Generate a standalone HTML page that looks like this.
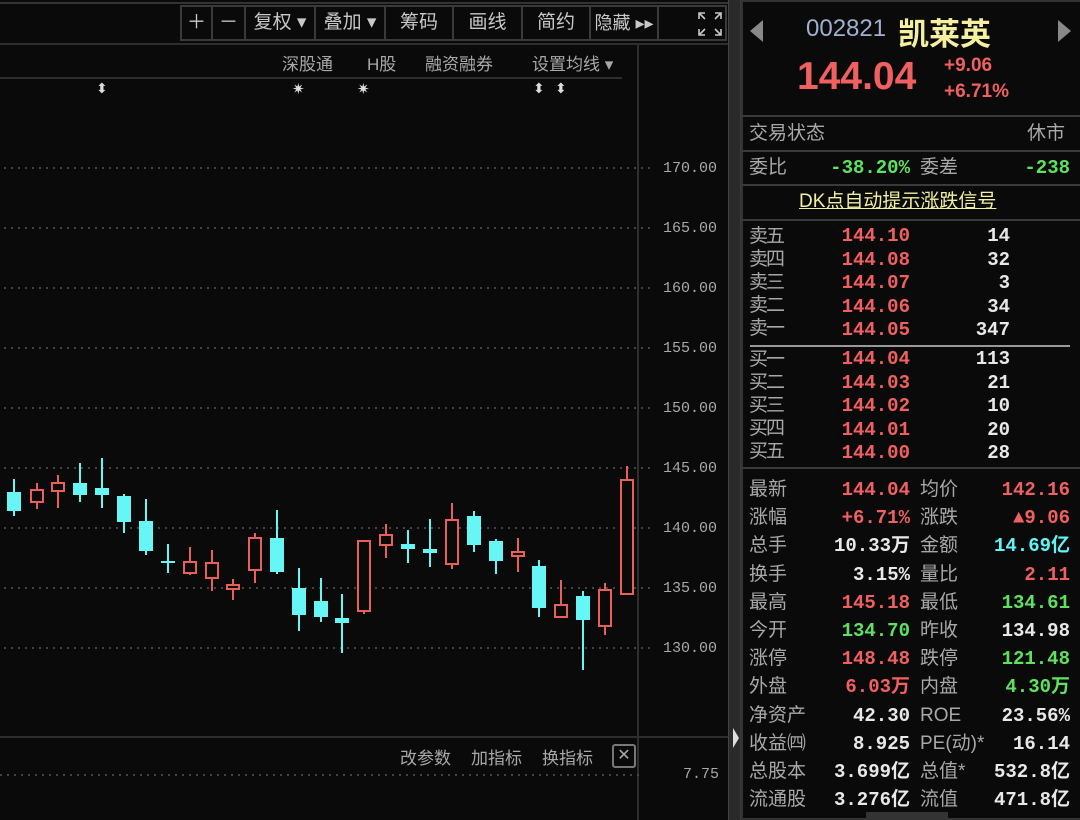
<!DOCTYPE html>
<html><head><meta charset="utf-8"><style>
*{margin:0;padding:0;box-sizing:border-box}
body{width:1080px;height:820px;background:#0a0a0a;position:relative;overflow:hidden;font-family:"Liberation Sans","Noto Sans CJK SC",sans-serif;color:#c8c8c8}
.a{position:absolute;white-space:nowrap}
.hl{position:absolute;height:2px;background:#2e2e2e}
.vl{position:absolute;width:2px;background:#2e2e2e}
.btn{position:absolute;top:5px;height:36px;border:2px solid #3a3a3a;color:#c8c8c8;font-size:19px;line-height:32px;text-align:center}
.tb{font-size:17px;color:#a8a8a8}
.ax{font-family:"Liberation Mono",monospace;font-size:15px;color:#a8a8a8}
.lb{font-size:19px;color:#a8a8a8;line-height:22px}
.v{font-size:19px;font-family:"Liberation Mono","Noto Sans CJK SC",monospace;font-weight:bold;line-height:22px;text-align:right}
.r{color:#f06060}.g{color:#60e060}.w{color:#e8e8e8}.c{color:#60f4f4}
.ob{font-size:19px;color:#a8a8a8;line-height:23px;letter-spacing:-2px}
</style></head><body>
<div class="hl" style="left:0;top:2px;width:728px;background:#333"></div>
<div class="btn" style="left:180px;width:33px">＋</div>
<div class="btn" style="left:211px;width:35px">－</div>
<div class="btn" style="left:244px;width:72px">复权 ▾</div>
<div class="btn" style="left:314px;width:72px">叠加 ▾</div>
<div class="btn" style="left:384px;width:70px">筹码</div>
<div class="btn" style="left:452px;width:71px">画线</div>
<div class="btn" style="left:521px;width:70px">简约</div>
<div class="btn" style="left:589px;width:70px;font-size:18px">隐藏 ▸▸</div>
<div class="btn" style="left:657px;width:70px;font-size:16px"></div>
<svg class="a" style="left:697px;top:11px" width="26" height="26" viewBox="0 0 26 26" fill="none" stroke="#c8c8c8" stroke-width="1.6"><path d="M2 8V2h6M2 2l6 6M24 8V2h-6M24 2l-6 6M2 18v6h6M2 24l6-6M24 18v6h-6M24 24l-6-6"/></svg>
<div class="hl" style="left:0;top:43px;width:728px"></div>
<div class="hl" style="left:0;top:77px;width:622px"></div>
<div class="a tb" style="left:282px;top:50px">深股通</div>
<div class="a tb" style="left:367px;top:50px">H股</div>
<div class="a tb" style="left:425px;top:50px">融资融券</div>
<div class="a tb" style="left:532px;top:50px">设置均线 ▾</div>
<div class="a" style="left:96px;top:80px;color:#ddd;font-size:14px">⬍</div>
<div class="a" style="left:292px;top:80px;color:#ddd;font-size:15px">✷</div>
<div class="a" style="left:357px;top:80px;color:#ddd;font-size:15px">✷</div>
<div class="a" style="left:533px;top:80px;color:#ddd;font-size:14px">⬍</div>
<div class="a" style="left:555px;top:80px;color:#ddd;font-size:14px">⬍</div>
<div class="vl" style="left:637px;top:44px;height:776px"></div>
<div class="hl" style="left:0;top:736px;width:728px"></div>
<svg class="a" style="left:0;top:0" width="728" height="820">
<g stroke="#444" stroke-width="2" stroke-dasharray="2 5">
<line x1="4" y1="168" x2="652" y2="168"/><line x1="4" y1="228" x2="652" y2="228"/><line x1="4" y1="288" x2="652" y2="288"/><line x1="4" y1="348" x2="652" y2="348"/><line x1="4" y1="408" x2="652" y2="408"/><line x1="4" y1="468" x2="652" y2="468"/><line x1="4" y1="528" x2="652" y2="528"/><line x1="4" y1="588" x2="652" y2="588"/><line x1="4" y1="648" x2="652" y2="648"/><line x1="0" y1="775" x2="640" y2="775"/>
</g>
<g id="k"></g>
</svg>
<div class="a ax" style="left:663px;top:160px">170.00</div>
<div class="a ax" style="left:663px;top:220px">165.00</div>
<div class="a ax" style="left:663px;top:280px">160.00</div>
<div class="a ax" style="left:663px;top:340px">155.00</div>
<div class="a ax" style="left:663px;top:400px">150.00</div>
<div class="a ax" style="left:663px;top:460px">145.00</div>
<div class="a ax" style="left:663px;top:520px">140.00</div>
<div class="a ax" style="left:663px;top:580px">135.00</div>
<div class="a ax" style="left:663px;top:640px">130.00</div>
<div class="a ax" style="left:683px;top:766px">7.75</div>
<div class="a tb" style="left:400px;top:744px">改参数</div>
<div class="a tb" style="left:471px;top:744px">加指标</div>
<div class="a tb" style="left:542px;top:744px">换指标</div>
<div class="a" style="left:612px;top:744px;width:24px;height:24px;border:2px solid #777;border-radius:3px;color:#aaa;font-size:16px;line-height:20px;text-align:center">✕</div>
<div class="a" style="left:728px;top:0;width:13px;height:820px;background:#2a2a2a;border-left:1px solid #444;border-right:1px solid #3a3a3a"></div>
<div class="a" style="left:733px;top:728px;width:0;height:0;border-top:10px solid transparent;border-bottom:10px solid transparent;border-left:6px solid #ddd"></div>
<div class="a" style="left:741px;top:0;width:339px;height:820px;border:2px solid #333;border-right:none"></div>
<div class="a" style="left:750px;top:20px;width:0;height:0;border-top:11px solid transparent;border-bottom:11px solid transparent;border-right:13px solid #888"></div>
<div class="a" style="left:1058px;top:20px;width:0;height:0;border-top:11px solid transparent;border-bottom:11px solid transparent;border-left:13px solid #888"></div>
<div class="a" style="left:806px;top:15px;font-size:24px;color:#9fb0d0">002821</div>
<div class="a" style="left:898px;top:9px;font-size:31px;color:#f4f0a0;font-weight:bold">凯莱英</div>
<div class="a r" style="left:797px;top:55px;font-size:39px;font-weight:bold">144.04</div>
<div class="a r" style="left:944px;top:55px;font-size:19px;font-weight:bold">+9.06</div>
<div class="a r" style="left:944px;top:81px;font-size:19px;font-weight:bold">+6.71%</div>
<div class="hl" style="left:741px;top:115px;width:339px;background:#3a3a3a"></div>
<div class="a lb" style="left:749px;top:123px">交易状态</div>
<div class="a lb" style="left:1027px;top:123px">休市</div>
<div class="hl" style="left:741px;top:150px;width:339px;background:#3a3a3a"></div>
<div class="a lb" style="left:749px;top:157px">委比</div>
<div class="a v g" style="left:820px;top:157px;width:90px">-38.20%</div>
<div class="a lb" style="left:920px;top:157px">委差</div>
<div class="a v g" style="left:1000px;top:157px;width:70px">-238</div>
<div class="hl" style="left:741px;top:184px;width:339px;background:#3a3a3a"></div>
<div class="a" style="left:799px;top:191px;font-size:19px;color:#f0f0a0;text-decoration:underline;line-height:22px">DK点自动提示涨跌信号</div>
<div class="hl" style="left:741px;top:219px;width:339px;background:#3a3a3a"></div>
<div class="a ob" style="left:749px;top:225px">卖五<br>卖四<br>卖三<br>卖二<br>卖一</div>
<div class="a v r" style="left:830px;top:225px;width:80px;line-height:23.5px">144.10<br>144.08<br>144.07<br>144.06<br>144.05</div>
<div class="a v w" style="left:940px;top:225px;width:70px;line-height:23.5px">14<br>32<br>3<br>34<br>347</div>
<div class="hl" style="left:750px;top:345px;width:320px;background:#999"></div>
<div class="a ob" style="left:749px;top:348px">买一<br>买二<br>买三<br>买四<br>买五</div>
<div class="a v r" style="left:830px;top:348px;width:80px;line-height:23.5px">144.04<br>144.03<br>144.02<br>144.01<br>144.00</div>
<div class="a v w" style="left:940px;top:348px;width:70px;line-height:23.5px">113<br>21<br>10<br>20<br>28</div>
<div class="hl" style="left:741px;top:467px;width:339px;background:#3a3a3a"></div>
<div class="a lb" style="left:749px;top:476px;line-height:28.2px">最新<br>涨幅<br>总手<br>换手<br>最高<br>今开<br>涨停<br>外盘<br>净资产<br>收益㈣<br>总股本<br>流通股</div>
<div class="a v" style="left:810px;top:476px;width:100px;line-height:28.2px"><span class="r">144.04</span><br><span class="r">+6.71%</span><br><span class="w">10.33万</span><br><span class="w">3.15%</span><br><span class="r">145.18</span><br><span class="g">134.70</span><br><span class="r">148.48</span><br><span class="r">6.03万</span><br><span class="w">42.30</span><br><span class="w">8.925</span><br><span class="w">3.699亿</span><br><span class="w">3.276亿</span></div>
<div class="a lb" style="left:920px;top:476px;line-height:28.2px">均价<br>涨跌<br>金额<br>量比<br>最低<br>昨收<br>跌停<br>内盘<br>ROE<br>PE(动)*<br>总值*<br>流值</div>
<div class="a v" style="left:970px;top:476px;width:100px;line-height:28.2px"><span class="r">142.16</span><br><span class="r">▲9.06</span><br><span class="c">14.69亿</span><br><span class="r">2.11</span><br><span class="g">134.61</span><br><span class="w">134.98</span><br><span class="g">121.48</span><br><span class="g">4.30万</span><br><span class="w">23.56%</span><br><span class="w">16.14</span><br><span class="w">532.8亿</span><br><span class="w">471.8亿</span></div>
<div class="a" style="left:866px;top:812px;width:82px;height:8px;background:#333"></div>
<script>
var d=[[14,479,516,492,511,0],[37,483,509,490,502,1],[58,475,508,483,491,1],[80,463,502,483,495,0],[102,458,508,488,495,0],[124,494,533,496,522,0],[146,499,555,521,551,0],[168,544,573,561,563,0],[190,547,575,562,573,1],[212,550,591,563,578,1],[233,579,600,585,589,1],[255,533,583,538,570,1],[277,510,574,538,572,0],[299,568,631,588,615,0],[321,578,622,601,617,0],[342,594,653,618,623,0],[364,541,614,541,611,1],[386,524,558,535,545,1],[408,530,563,544,549,0],[430,519,567,549,553,0],[452,503,569,520,564,1],[474,511,552,516,545,0],[496,539,574,541,561,0],[518,538,572,552,556,1],[539,560,617,566,608,0],[561,580,617,605,617,1],[583,591,670,596,620,0],[605,583,635,590,626,1],[627,466,594,480,594,1]];
var s='';d.forEach(function(c){var x=c[0],col=c[5]?'#e8605a':'#66f6f6';
s+='<line x1="'+x+'" y1="'+c[1]+'" x2="'+x+'" y2="'+c[2]+'" stroke="'+col+'" stroke-width="2"/>';
if(c[5])s+='<rect x="'+(x-6)+'" y="'+c[3]+'" width="12" height="'+Math.max(c[4]-c[3],2)+'" fill="#0a0a0a" stroke="'+col+'" stroke-width="2"/>';
else s+='<rect x="'+(x-7)+'" y="'+c[3]+'" width="14" height="'+Math.max(c[4]-c[3],2)+'" fill="'+col+'"/>';});
document.getElementById('k').innerHTML=s;
</script>
</body></html>
